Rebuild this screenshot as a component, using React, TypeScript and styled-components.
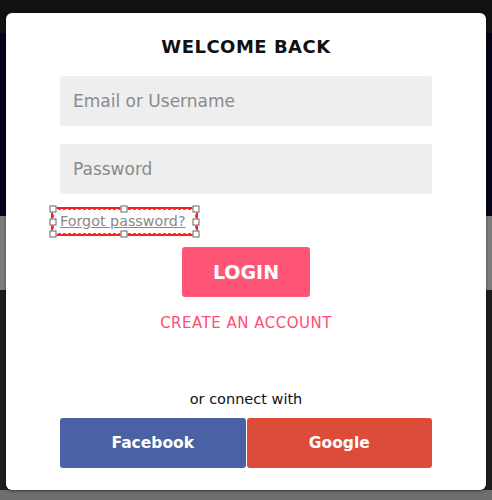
import React from "react";
import styled, { createGlobalStyle } from "styled-components";

const Global = createGlobalStyle`
  html, body { margin: 0; padding: 0; }
  body { width: 492px; height: 500px; overflow: hidden; background: #111; font-family: "DejaVu Sans", "Noto Sans", sans-serif; }
`;

const Page = styled.div`
  position: relative;
  width: 492px;
  height: 500px;
  display: flex;
  flex-direction: column;
`;

const Stripe = styled.div<{ $h: number; $bg: string }>`
  height: ${(p) => p.$h}px;
  background: ${(p) => p.$bg};
  flex-shrink: 0;
`;

const Modal = styled.div`
  position: absolute;
  left: 6px;
  top: 13px;
  width: 480px;
  height: 477px;
  box-sizing: border-box;
  background: #fff;
  border-radius: 6px;
  box-shadow: 0 1px 3px rgba(0, 0, 0, 0.5);
  padding: 22px 54px 0;
  display: flex;
  flex-direction: column;
  align-items: stretch;
`;

const Title = styled.h1`
  margin: 0;
  font-size: 18px;
  line-height: 24px;
  font-weight: 700;
  color: #111;
  text-align: center;
  letter-spacing: 0.5px;
`;

const Input = styled.input<{ $mt: number }>`
  display: block;
  box-sizing: border-box;
  width: 100%;
  height: 50px;
  border: none;
  border-radius: 3px;
  background: #eeeeee;
  padding: 0 13px;
  font-family: inherit;
  font-size: 17px;
  color: #333;
  outline: none;
  margin-top: ${(p) => p.$mt}px;
  &::placeholder { color: #8a8a8a; }
`;

const ForgotRow = styled.div`
  margin-top: 18px;
  height: 18px;
  display: flex;
`;

const Selection = styled.div`
  position: relative;
  display: inline-flex;
  align-items: center;
`;

const SelFrame = styled.div`
  position: absolute;
  left: -9px;
  top: -5px;
  right: -12px;
  bottom: -6px;
  border: 2px solid #ff1f1f;
  box-sizing: border-box;
  &::after {
    content: "";
    position: absolute;
    inset: 0;
    border: 1px dashed #6b6fc4;
  }
`;

const Handle = styled.span<{ $x: string; $y: string }>`
  position: absolute;
  width: 5px;
  height: 5px;
  background: #fff;
  border: 1px solid #666;
  left: ${(p) => p.$x};
  top: ${(p) => p.$y};
  transform: translate(-50%, -50%);
  z-index: 2;
`;

const Forgot = styled.a`
  font-size: 14.3px;
  line-height: 18px;
  color: #888;
  text-decoration: underline;
  cursor: pointer;
`;

const LoginButton = styled.button`
  align-self: center;
  margin-top: 17px;
  width: 128px;
  height: 50px;
  border: none;
  border-radius: 3px;
  background: #ff5577;
  color: #fff;
  font-family: inherit;
  font-weight: 700;
  font-size: 19px;
  cursor: pointer;
`;

const CreateLink = styled.a`
  margin-top: 17px;
  text-align: center;
  font-size: 15px;
  line-height: 18px;
  color: #ff4d73;
  letter-spacing: 0.5px;
  cursor: pointer;
`;

const ConnectText = styled.div`
  margin-top: 58px;
  text-align: center;
  font-size: 14.5px;
  line-height: 18px;
  color: #111;
`;

const SocialRow = styled.div`
  margin-top: 10px;
  display: flex;
  gap: 1px;
`;

const SocialButton = styled.button<{ $bg: string }>`
  flex: 1;
  height: 50px;
  border: none;
  border-radius: 3px;
  background: ${(p) => p.$bg};
  color: #fff;
  font-family: inherit;
  font-weight: 700;
  font-size: 15.5px;
  cursor: pointer;
`;

export default function App() {
  const handles: [string, string][] = [
    ["0%", "0%"], ["50%", "0%"], ["100%", "0%"],
    ["0%", "50%"], ["100%", "50%"],
    ["0%", "100%"], ["50%", "100%"], ["100%", "100%"],
  ];
  return (
    <>
      <Global />
      <Page>
        <Stripe $h={33} $bg="#121212" />
        <Stripe $h={183} $bg="#03031a" />
        <Stripe $h={74} $bg="#7b7b7b" />
        <Stripe $h={200} $bg="#1d1d1f" />
        <Stripe $h={10} $bg="#6e6e6e" />
        <Modal>
          <Title>WELCOME BACK</Title>
          <Input $mt={17} placeholder="Email or Username" />
          <Input $mt={18} type="password" placeholder="Password" />
          <ForgotRow>
            <Selection>
              <Forgot>Forgot password?</Forgot>
              <SelFrame>
                {handles.map(([x, y], i) => (
                  <Handle key={i} $x={x} $y={y} />
                ))}
              </SelFrame>
            </Selection>
          </ForgotRow>
          <LoginButton>LOGIN</LoginButton>
          <CreateLink>CREATE AN ACCOUNT</CreateLink>
          <ConnectText>or connect with</ConnectText>
          <SocialRow>
            <SocialButton $bg="#4a62a4">Facebook</SocialButton>
            <SocialButton $bg="#dd4b39">Google</SocialButton>
          </SocialRow>
        </Modal>
      </Page>
    </>
  );
}
